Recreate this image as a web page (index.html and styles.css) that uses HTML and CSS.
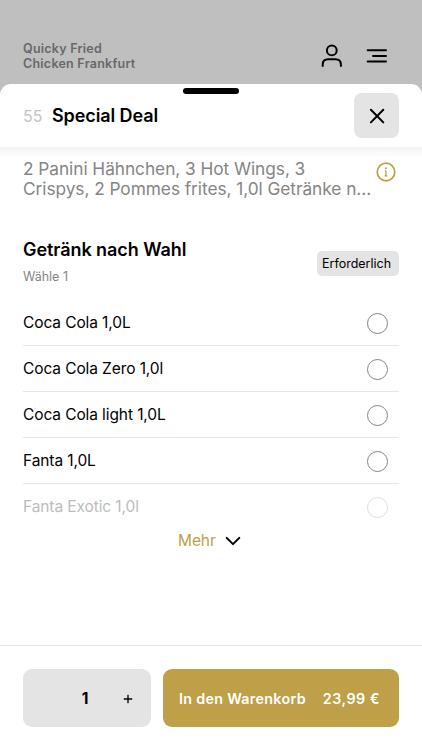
FILE: index.html
```html
<!DOCTYPE html>
<html lang="de">
<head>
<meta charset="utf-8">
<meta name="viewport" content="width=device-width, initial-scale=1">
<title>Special Deal</title>
<link rel="stylesheet" href="styles.css">
</head>
<body>
<header class="topbar">
  <div class="brand">Quicky Fried<br>Chicken Frankfurt</div>
  <div class="top-icons">
    <svg width="22" height="24" viewBox="0 0 22 24"><circle cx="10.8" cy="6.4" r="4.9"/><path d="M1.7 22V20.7C1.7 17.2 4 15.3 7.2 15.3H14.4C17.6 15.3 19.9 17.2 19.9 20.7V22"/></svg>
    <svg width="22" height="24" viewBox="0 0 22 24"><path d="M1.7 6.3H20M7 12H20M1.7 17.6H20"/></svg>
  </div>
</header>
<main class="sheet">
  <div class="handle"></div>
  <div class="sheet-head">
    <span class="number">55</span>
    <h1 class="title">Special Deal</h1>
    <button class="close" aria-label="Schließen"><svg width="18" height="18" viewBox="0 0 18 18"><path d="M2.9 2.7L15.3 15.4M15.3 2.7L2.9 15.4"/></svg></button>
  </div>
  <div class="content">
    <div class="description">
      <p>2 Panini Hähnchen, 3 Hot Wings, 3<br>Crispys, 2 Pommes frites, 1,0l Getränke n...</p>
      <svg class="info" width="20" height="20" viewBox="0 0 20 20"><circle cx="10" cy="10" r="8.8"/><path d="M10 8.7V13.6M9 8.7H10M8.7 13.8H11.3"/><circle class="dot" cx="10" cy="6.2" r="1"/></svg>
    </div>
    <section class="group">
      <div class="group-head">
        <div><h2>Getränk nach Wahl</h2><p class="hint">Wähle 1</p></div>
        <span class="required">Erforderlich</span>
      </div>
      <ul class="options">
        <li><span class="name">Coca Cola 1,0L</span><i class="radio"></i></li>
        <li><span class="name">Coca Cola Zero 1,0l</span><i class="radio"></i></li>
        <li><span class="name">Coca Cola light 1,0L</span><i class="radio"></i></li>
        <li><span class="name">Fanta 1,0L</span><i class="radio"></i></li>
        <li class="faded"><span class="name">Fanta Exotic 1,0l</span><i class="radio"></i></li>
      </ul>
      <div class="more"><span>Mehr</span><svg width="16" height="12" viewBox="0 0 16 12"><path d="M1.7 2.9L8 9.1L14.3 2.9"/></svg></div>
    </section>
  </div>
  <footer class="footer">
    <div class="quantity"><span></span><b>1</b><svg width="10" height="10" viewBox="0 0 10 10"><path d="M5 .8V9.2M.8 5H9.2"/></svg></div>
    <button class="cart"><span class="cart-label">In den Warenkorb</span><span class="price">23,99 €</span></button>
  </footer>
</main>
</body>
</html>
```
FILE: styles.css
```css
* { box-sizing: border-box; margin: 0; padding: 0; }
body { height: 750px; overflow: hidden; background: #bfbfbf; color: #000; font-family: Inter, "Liberation Sans", sans-serif; display: flex; flex-direction: column; }
svg { display: block; fill: none; stroke: #000; stroke-width: 2; stroke-linecap: round; stroke-linejoin: round; flex: none; }
button { border: 0; font: inherit; }
.topbar { height: 84px; flex: none; padding: 41px 34px 0 23px; display: flex; justify-content: space-between; }
.brand { font-size: 12.5px; line-height: 15px; font-weight: 600; color: #686868; white-space: nowrap; letter-spacing: .24px; }
.top-icons { display: flex; gap: 23px; padding-top: 3px; }
.sheet { flex: 1; position: relative; background: #fff; border-radius: 11px 11px 0 0; display: flex; flex-direction: column; }
.handle { position: absolute; top: 4.4px; left: 183px; width: 56px; height: 5.6px; border-radius: 3px; background: #000; }
.sheet-head { height: 63px; flex: none; padding: 0 23px; display: flex; align-items: center; }
.number { width: 29px; font-size: 16px; color: #c4c4c4; }
.title { font-size: 18px; font-weight: 600; white-space: nowrap; letter-spacing: -.1px; }
.close { width: 45px; height: 45px; margin-left: auto; border-radius: 8px; background: #e4e4e4; display: flex; align-items: center; justify-content: center; }
.content { flex: 1; padding: 12px 23px 0; background: linear-gradient(#f3f3f3, #fff 11px); }
.description { display: flex; justify-content: space-between; height: 75px; font-size: 17.3px; line-height: 20px; color: #858585; white-space: nowrap; letter-spacing: -.05px; }
.info { margin: 3px 3px 0 0; stroke: #bda047; stroke-width: 1.7; }
.info path { stroke-width: 1.2; stroke-linecap: butt; }
.info .dot { fill: #bda047; stroke: none; }
.group-head { display: flex; justify-content: space-between; height: 66px; padding-top: 4px; }
h2 { font-size: 18px; line-height: 24px; font-weight: 600; letter-spacing: -.06px; white-space: nowrap; }
.hint { margin-top: 6px; font-size: 12.5px; line-height: 18px; color: #858585; }
.required { width: 82px; height: 25px; margin-top: 13px; padding-left: 5px; border-radius: 5px; background: #e4e4e4; font-size: 12.5px; line-height: 25px; white-space: nowrap; }
.options { list-style: none; }
.options li { height: 46px; padding-right: 11px; display: flex; align-items: center; justify-content: space-between; border-bottom: 1px solid #e6e6e6; }
.name { font-size: 15.5px; letter-spacing: -.1px; }
.radio { width: 21px; height: 21px; margin-top: 1px; border: 1px solid #858585; border-radius: 50%; }
.options .faded { height: 45px; border: 0; color: #bcbcbc; }
.faded .radio { border-color: #dedede; }
.more { height: 22px; padding-left: 155px; display: flex; align-items: center; gap: 9px; font-size: 15.5px; letter-spacing: -.1px; color: #bda047; }
.more svg { margin-top: 2px; }
.footer { height: 105px; flex: none; padding: 23px 23px 0; display: flex; gap: 12px; border-top: 1px solid #e6e6e6; background: #fff; }
.quantity { width: 128px; height: 58px; border-radius: 9px; background: #e4e4e4; display: grid; grid-template-columns: 42px 40px 46px; align-items: center; justify-items: center; }
.quantity b { font-size: 15.5px; font-weight: 700; }
.quantity svg { margin-top: 1px; stroke-width: 1.3; stroke-linecap: butt; }
.cart { flex: 1; height: 58px; padding: 0 19px 0 16px; border-radius: 9px; background: #bda047; color: #fff; display: flex; align-items: center; justify-content: space-between; font-size: 14.3px; font-weight: 600; letter-spacing: .31px; white-space: nowrap; }
.price { letter-spacing: .5px; }
```
